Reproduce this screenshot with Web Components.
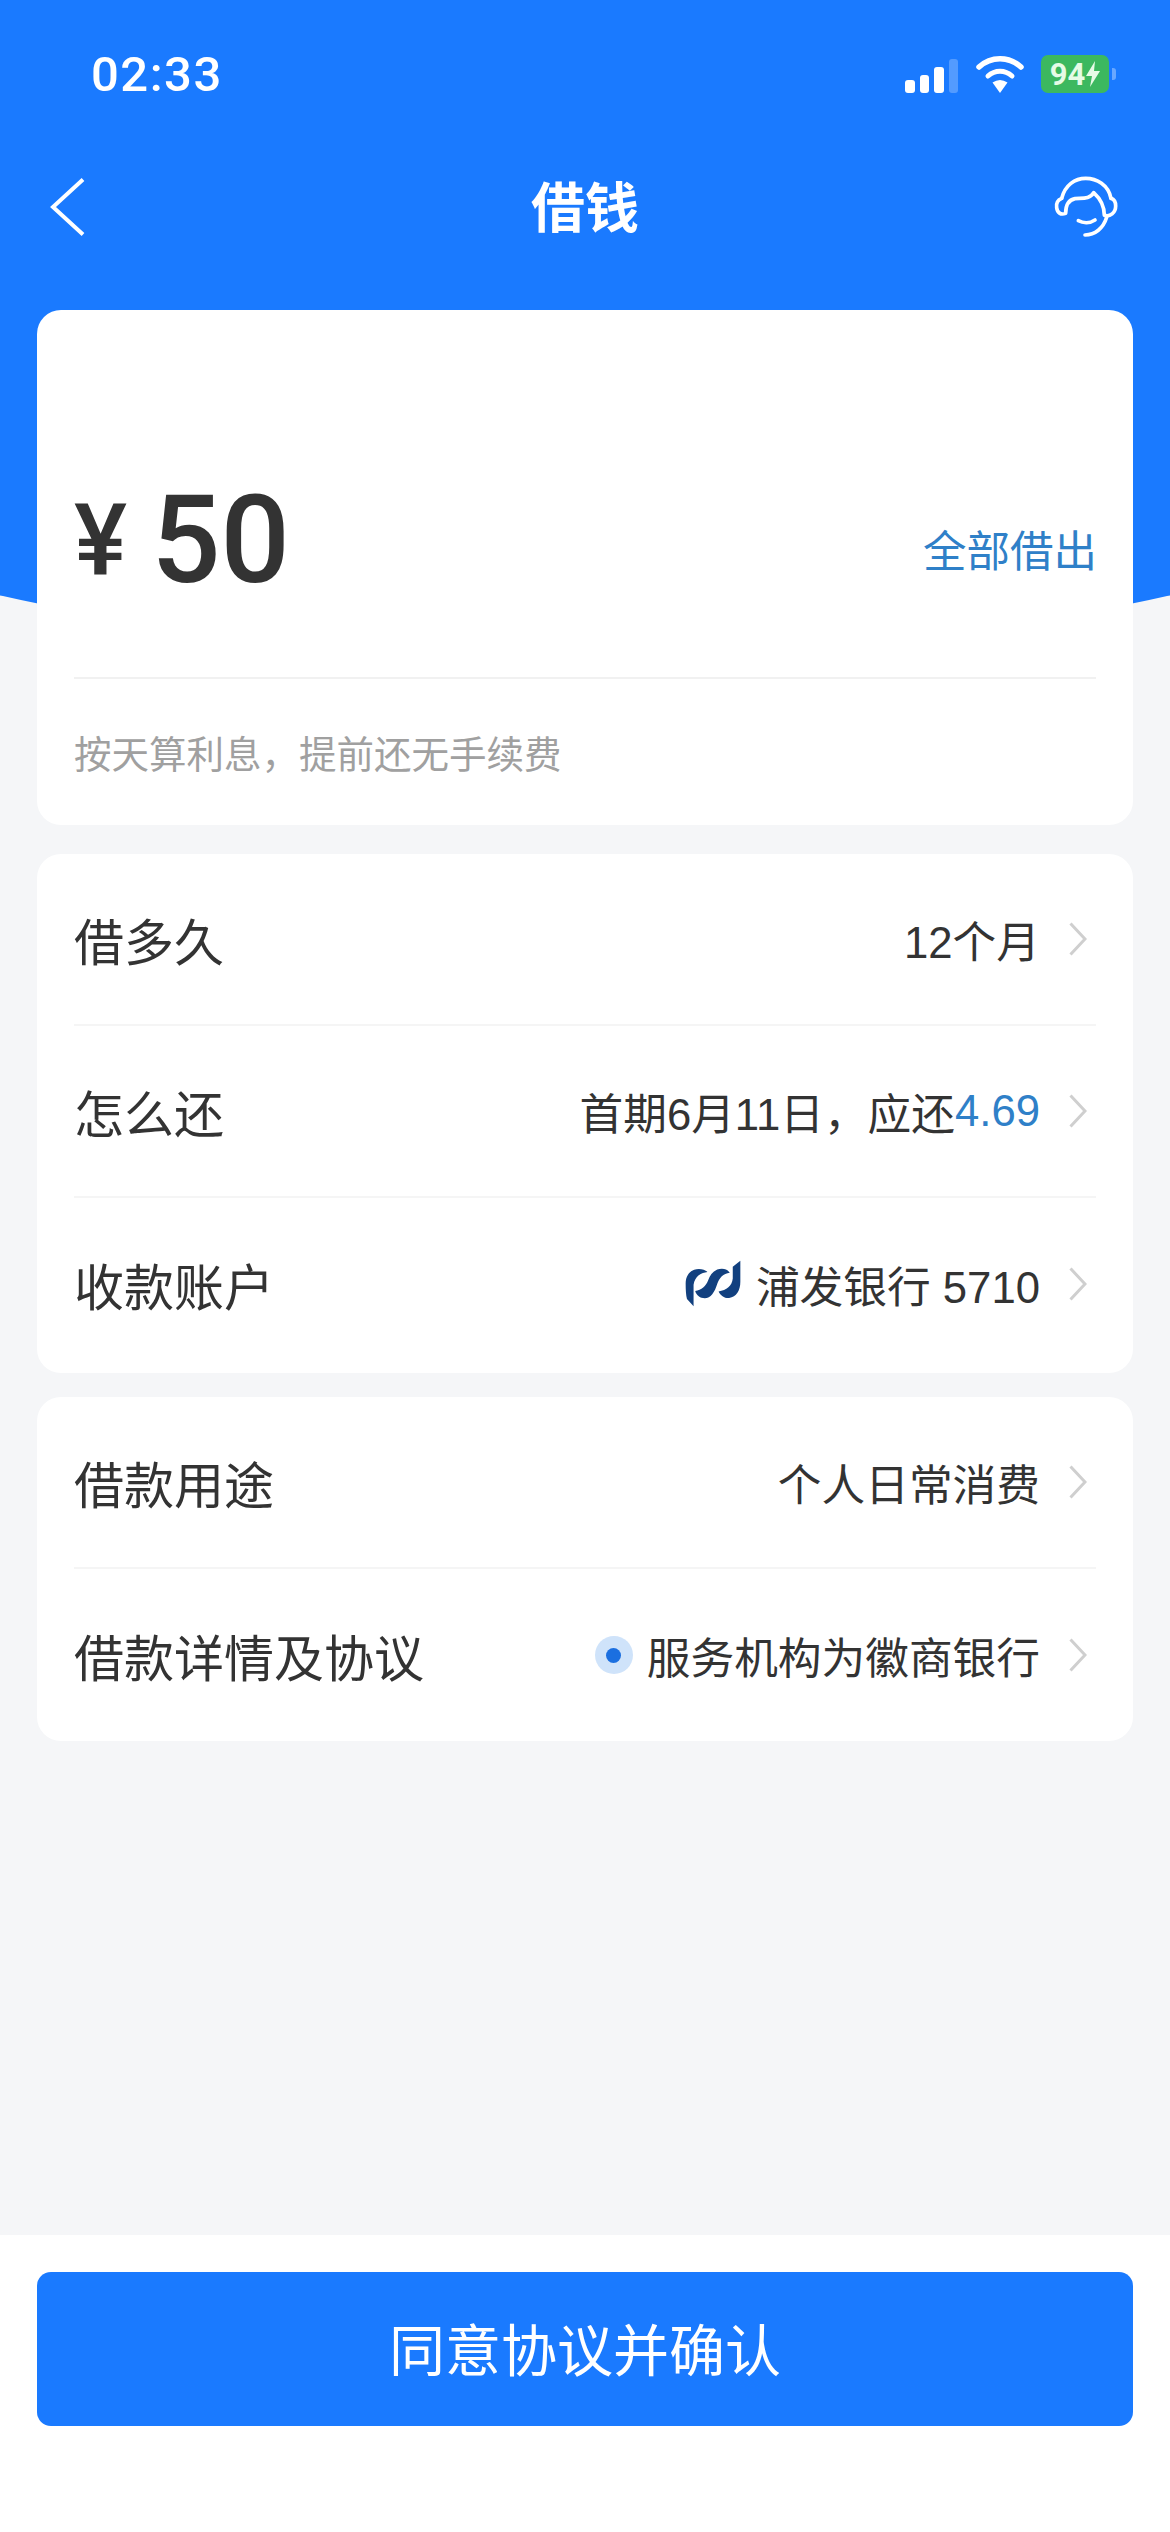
<!DOCTYPE html>
<html lang="zh">
<head>
<meta charset="utf-8">
<title>借钱</title>
<style>
  html, body { margin: 0; padding: 0; }
  body { font-family: "Liberation Sans", "Noto Sans CJK SC", sans-serif; }
</style>
</head>
<body>
<loan-page>
  <status-bar time="02:33" battery="94"></status-bar>
  <nav-bar title="借钱"></nav-bar>
  <div slot="content">
    <amount-card amount="50" action="全部借出" note="按天算利息，提前还无手续费"></amount-card>
    <list-card style="padding-bottom:3px">
      <list-row label="借多久">12个月</list-row>
      <list-row label="怎么还">首期6月11日，应还<accent-text>4.69</accent-text></list-row>
      <list-row label="收款账户"><bank-logo></bank-logo>浦发银行 5710</list-row>
    </list-card>
    <list-card>
      <list-row label="借款用途">个人日常消费</list-row>
      <list-row label="借款详情及协议"><dot-mark></dot-mark>服务机构为徽商银行</list-row>
    </list-card>
  </div>
  <confirm-bar slot="footer">同意协议并确认</confirm-bar>
</loan-page>

<script>
const CJK_STACK = '"Liberation Sans", "Noto Sans CJK SC", sans-serif';

class LoanPage extends HTMLElement {
  constructor() {
    super();
    this.attachShadow({ mode: 'open' });
    this.shadowRoot.innerHTML = `
      <style>
        :host {
          display: flex;
          flex-direction: column;
          position: relative;
          overflow: hidden;
          width: 1170px;
          height: 2532px;
          background: #f5f6f8;
        }
        .dome {
          position: absolute;
          left: -115px;
          top: 0;
          width: 1400px;
          height: 645px;
          border-radius: 0 0 50% 50% / 0 0 110px 110px;
          background: #1a7aff;
        }
        .head, .content { position: relative; }
        .content { flex: 1; }
      </style>
      <div class="dome"></div>
      <div class="head"><slot></slot></div>
      <div class="content"><slot name="content"></slot></div>
      <slot name="footer"></slot>
    `;
  }
}

class StatusBar extends HTMLElement {
  constructor() {
    super();
    this.attachShadow({ mode: 'open' });
    const time = this.getAttribute('time');
    const battery = this.getAttribute('battery');
    this.shadowRoot.innerHTML = `
      <style>
        :host {
          display: flex;
          align-items: center;
          justify-content: space-between;
          height: 148px;
          padding: 0 54px 0 91px;
          color: #fff;
        }
        .time { font: 500 49px Roboto, sans-serif; letter-spacing: 1.500px; }
        .icons { display: flex; align-items: center; }
        .bars { display: flex; align-items: flex-end; gap: 5px; height: 36px; margin-top: 2px; }
        .bars i { width: 9.500px; border-radius: 3px; background: #fff; }
        .wifi { margin-left: 18px; }
        .battery {
          display: flex;
          align-items: center;
          justify-content: center;
          gap: 1px;
          width: 68px;
          height: 38px;
          margin-left: 17px;
          border-radius: 7px;
          background: #3cb85f;
          color: #e6fbe6;
          font: 700 31px Roboto, sans-serif;
        }
        .nub { width: 4px; height: 12px; margin-left: 3px; border-radius: 0 3px 3px 0; background: rgba(255,255,255,.35); }
      </style>
      <span class="time">${time}</span>
      <div class="icons">
        <div class="bars">
          <i style="height:13px"></i><i style="height:18px"></i><i style="height:26px"></i><i style="height:34px;opacity:.25"></i>
        </div>
        <svg class="wifi" width="48" height="37" viewBox="0 0 48 37">
          <path d="M3 11C15 0 33 0 45 11" fill="none" stroke="#fff" stroke-width="5.500" stroke-linecap="round"/>
          <path d="M12 20C19 13.500 29 13.500 36 20" fill="none" stroke="#fff" stroke-width="5" stroke-linecap="round"/>
          <path d="M16.500 26.500Q24 21.500 31.500 26.500L24 37Z" fill="#fff"/>
        </svg>
        <div class="battery">${battery}<svg width="14" height="26" viewBox="0 0 14 26"><path d="M9 0L0 15H6L4 26L14 10H8Z" fill="#e6fbe6"/></svg></div>
        <span class="nub"></span>
      </div>
    `;
  }
}

class NavBar extends HTMLElement {
  constructor() {
    super();
    this.attachShadow({ mode: 'open' });
    this.shadowRoot.innerHTML = `
      <style>
        :host {
          display: grid;
          grid-template-columns: 1fr auto 1fr;
          align-items: center;
          height: 118px;
          padding: 0 50px;
          color: #fff;
        }
        h1 { margin: 0 0 6px; font: 700 54px ${CJK_STACK}; }
        .help { justify-self: end; margin-right: -5px; }
      </style>
      <svg width="36" height="58" viewBox="0 0 36 58">
        <path d="M33 1.500L3 29L33 56.500" fill="none" stroke="#fff" stroke-width="4"/>
      </svg>
      <h1>${this.getAttribute('title')}</h1>
      <svg class="help" width="80" height="75" viewBox="0 0 240 225" fill="none" stroke="#fff" stroke-width="11" stroke-linecap="round" stroke-linejoin="round">
        <path d="M50 85C60 45 90 25 122 25C155 25 190 45 198 85"/>
        <path d="M50 85C38 90 33 100 35 113C37 128 47 136 62 130C62 105 70 90 90 86C112 84 135 88 146 68C166 86 178 110 178 136C195 142 212 128 212 108C212 96 207 88 198 85"/>
        <path d="M100 152C115 160 135 160 150 150"/>
        <path d="M120 195C150 195 175 175 185 142"/>
      </svg>
    `;
  }
}

class AmountCard extends HTMLElement {
  constructor() {
    super();
    this.attachShadow({ mode: 'open' });
    this.shadowRoot.innerHTML = `
      <style>
        :host {
          display: block;
          height: 515px;
          box-sizing: border-box;
          margin: 44px 37px 29px;
          padding: 170px 37px 0;
          border-radius: 24px;
          background: #fff;
        }
        .row {
          display: flex;
          align-items: center;
          height: 120px;
          padding-bottom: 77px;
          border-bottom: 2px solid #f1f1f1;
          box-sizing: content-box;
          color: #333;
        }
        .yen { font: 500 100px Roboto, sans-serif; margin-right: 24px; }
        .num { font: 500 122px Roboto, sans-serif; flex: 1; }
        .all { font: 43.500px ${CJK_STACK}; color: #2f80c8; margin-top: 16px; margin-right: -1px; }
        .note { margin-top: 45px; font: 37.500px ${CJK_STACK}; color: #a0a0a0; }
      </style>
      <div class="row">
        <span class="yen">¥</span>
        <span class="num">${this.getAttribute('amount')}</span>
        <span class="all">${this.getAttribute('action')}</span>
      </div>
      <div class="note">${this.getAttribute('note')}</div>
    `;
  }
}

class ListCard extends HTMLElement {
  constructor() {
    super();
    this.attachShadow({ mode: 'open' });
    this.shadowRoot.innerHTML = `
      <style>
        :host {
          display: block;
          margin: 0 37px 24px;
          border-radius: 24px;
          background: #fff;
        }
      </style>
      <slot></slot>
    `;
  }
}

class ListRow extends HTMLElement {
  constructor() {
    super();
    this.attachShadow({ mode: 'open' });
    this.shadowRoot.innerHTML = `
      <style>
        :host {
          display: flex;
          align-items: center;
          height: 172px;
          box-sizing: border-box;
          margin: 0 37px;
          color: #333;
        }
        :host(:not(:last-child)) { border-bottom: 2px solid #f5f5f5; }
        .label { font: 50px ${CJK_STACK}; }
        .value {
          display: flex;
          align-items: center;
          margin-left: auto;
          font: 43.700px ${CJK_STACK};
        }
        svg { margin: 0 9px 0 29px; }
      </style>
      <span class="label">${this.getAttribute('label')}</span>
      <span class="value"><slot></slot></span>
      <svg width="18" height="34" viewBox="0 0 18 34">
        <path d="M1.500 1.500L16 17L1.500 32.500" fill="none" stroke="#cfcfcf" stroke-width="3"/>
      </svg>
    `;
  }
}

class AccentText extends HTMLElement {
  constructor() {
    super();
    this.attachShadow({ mode: 'open' });
    this.shadowRoot.innerHTML = `<style>:host { color: #2f80c8; }</style><slot></slot>`;
  }
}

class BankLogo extends HTMLElement {
  constructor() {
    super();
    this.attachShadow({ mode: 'open' });
    this.shadowRoot.innerHTML = `
      <style>:host { display: block; width: 56px; height: 48px; margin-right: 15px; }</style>
      <svg width="56" height="48" viewBox="20 20 170 145" fill="#12407f">
        <path d="M22 92C22 62 40 47 62 47C73 47 82 50 88 56C70 58 50 68 46 95L46 160L26 138C23 128 22 110 22 92Z"/>
        <path d="M51 114C70 112 84 98 90 82C98 60 112 46 132 46C142 46 150 50 156 58C136 60 124 74 118 92C110 118 98 136 80 136C66 136 55 128 51 114Z"/>
        <path d="M188 22L165 40L165 76C163 98 146 112 122 115C128 128 140 136 154 135C176 133 188 112 188 86Z"/>
      </svg>
    `;
  }
}

class DotMark extends HTMLElement {
  constructor() {
    super();
    this.attachShadow({ mode: 'open' });
    this.shadowRoot.innerHTML = `
      <style>
        :host {
          display: flex;
          align-items: center;
          justify-content: center;
          width: 38px;
          height: 38px;
          margin-right: 14px;
          border-radius: 50%;
          background: #cfe3fa;
        }
        i { width: 15px; height: 15px; border-radius: 50%; background: #1b6fe0; }
      </style>
      <i></i>
    `;
  }
}

class ConfirmBar extends HTMLElement {
  constructor() {
    super();
    this.attachShadow({ mode: 'open' });
    this.shadowRoot.innerHTML = `
      <style>
        :host {
          display: block;
          height: 297px;
          box-sizing: border-box;
          padding: 37px 37px 0;
          background: #fff;
        }
        button {
          display: block;
          width: 100%;
          height: 154px;
          padding: 0 0 6px;
          border: 0;
          border-radius: 14px;
          background: #1a7aff;
          color: #fff;
          font: 56px ${CJK_STACK};
        }
      </style>
      <button><slot></slot></button>
    `;
  }
}

customElements.define('loan-page', LoanPage);
customElements.define('status-bar', StatusBar);
customElements.define('nav-bar', NavBar);
customElements.define('amount-card', AmountCard);
customElements.define('list-card', ListCard);
customElements.define('list-row', ListRow);
customElements.define('accent-text', AccentText);
customElements.define('bank-logo', BankLogo);
customElements.define('dot-mark', DotMark);
customElements.define('confirm-bar', ConfirmBar);
</script>
</body>
</html>
